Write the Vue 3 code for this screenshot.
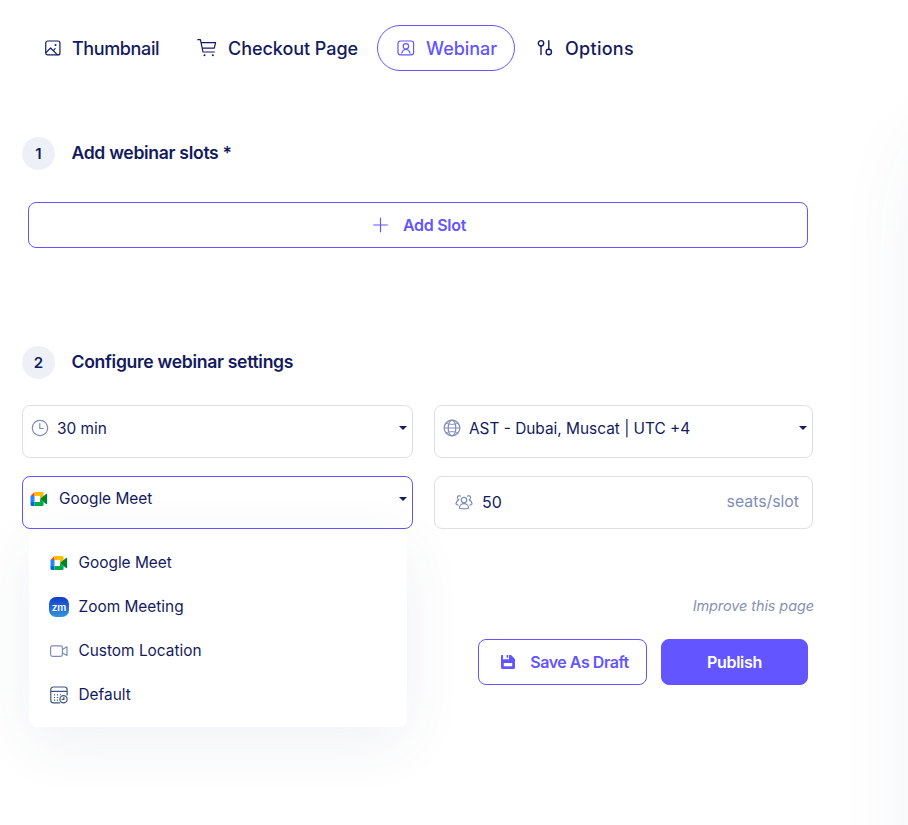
<script setup>
const tabs = [
  { id: 'thumbnail', label: 'Thumbnail' },
  { id: 'checkout', label: 'Checkout Page' },
  { id: 'webinar', label: 'Webinar', active: true },
  { id: 'options', label: 'Options' },
]
const locations = [
  { id: 'meet', label: 'Google Meet' },
  { id: 'zoom', label: 'Zoom Meeting' },
  { id: 'custom', label: 'Custom Location' },
  { id: 'default', label: 'Default' },
]
</script>

<template>
  <main class="page">
    <nav class="tabs">
      <a v-for="t in tabs" :key="t.id" class="tab" :class="['tab-' + t.id, { active: t.active }]">
        <svg v-if="t.id === 'thumbnail'" class="ic" width="16" height="16" viewBox="0 0 16 16">
          <rect x=".75" y="1" width="14.2" height="13.9" rx="2" />
          <path d="M1 12.6 5.6 8l6.6 6.7M9 9.8l1.1-1.1" />
          <circle cx="10.5" cy="5" r="1" class="dot" />
        </svg>
        <svg v-else-if="t.id === 'checkout'" class="ic" width="20" height="20" viewBox="0 0 20 20">
          <path d="M.8 1.7h2.6L6 14h11.3M4.2 4.6h14.4l-1.3 5.6H5.3" />
          <circle cx="7.5" cy="17.3" r="1" class="dot" />
          <circle cx="15.8" cy="17.3" r="1" class="dot" />
        </svg>
        <svg v-else-if="t.id === 'webinar'" class="ic" width="18" height="16" viewBox="0 0 18 16">
          <rect x="1" y="1" width="15.6" height="13.8" rx="2.4" />
          <circle cx="8.9" cy="6.3" r="2.7" />
          <path d="M4.8 13.1c.5-2.2 2-3.6 4.1-3.6s3.6 1.4 4.1 3.6" />
        </svg>
        <svg v-else class="ic bold" width="16" height="18" viewBox="0 0 16 18">
          <circle cx="4" cy="4.3" r="2.7" />
          <circle cx="11.8" cy="13" r="2.7" />
          <path d="M4 7v8.6M11.8 1.8v8.5" />
        </svg>
        <span>{{ t.label }}</span>
      </a>
    </nav>

    <section class="slots">
      <header class="step"><b>1</b><h2>Add webinar slots *</h2></header>
      <button class="btn outline add">
        <svg width="16" height="16" viewBox="0 0 16 16"><path d="M7.500 1.200v13.600M.7 8h13.600" /></svg>
        <span>Add Slot</span>
      </button>
    </section>

    <section class="settings">
      <header class="step"><b>2</b><h2 class="configure">Configure webinar settings</h2></header>
      <div class="fields">
        <div class="field">
          <svg class="muted" width="18" height="18" viewBox="0 0 18 18">
            <circle cx="9" cy="9" r="7.7" /><path d="M8.8 4.7v4.8h3.5" />
          </svg>
          <span>30 min</span><i class="caret"></i>
        </div>
        <div class="field">
          <svg class="muted" width="18" height="18" viewBox="0 0 18 18">
            <circle cx="9" cy="9" r="7.8" /><ellipse cx="9" cy="9" rx="3.8" ry="7.8" />
            <path d="M1.2 9h15.6" />
            <path d="M3 4.300c3.300 1.500 8.700 1.500 12 0M3 13.700c3.300-1.500 8.700-1.500 12 0" class="thin" />
          </svg>
          <span class="zone">AST - Dubai, Muscat | UTC +4</span><i class="caret"></i>
        </div>
        <div class="field open">
          <svg class="meet" width="18" height="16" viewBox="0 0 18 16">
            <path d="M.5 5 4.5 1v4z" fill="#ea4335" /><path d="M4.5 1H12c1 0 1.6.6 1.6 1.6V6L10 8V5H4.5z" fill="#fbbc04" />
            <path d="M.5 5h4v6h-4z" fill="#2684fc" /><path d="M.5 11h4v4H2C1 15 .5 14.4.5 13.5z" fill="#0066da" />
            <path d="M4.5 11H10V8l3.6 3v2.4c0 1-.6 1.6-1.6 1.6H4.5z" fill="#00ac47" /><path d="m10 8 6.1-5c.5-.4 1-.1 1 .5v9c0 .6-.5.9-1 .5z" fill="#00832d" />
          </svg>
          <span>Google Meet</span><i class="caret"></i>
          <ul class="menu">
            <li v-for="l in locations" :key="l.id">
              <svg v-if="l.id === 'meet'" width="20" height="16" viewBox="-1 0 20 16">
                <path d="M.5 5 4.5 1v4z" fill="#ea4335" /><path d="M4.5 1H12c1 0 1.6.6 1.6 1.6V6L10 8V5H4.5z" fill="#fbbc04" />
                <path d="M.5 5h4v6h-4z" fill="#2684fc" /><path d="M.5 11h4v4H2C1 15 .5 14.4.5 13.5z" fill="#0066da" />
                <path d="M4.5 11H10V8l3.6 3v2.4c0 1-.6 1.6-1.6 1.6H4.5z" fill="#00ac47" /><path d="m10 8 6.1-5c.5-.4 1-.1 1 .5v9c0 .6-.5.9-1 .5z" fill="#00832d" />
              </svg>
              <em v-else-if="l.id === 'zoom'" class="zm">zm</em>
              <svg v-else-if="l.id === 'custom'" class="muted" width="20" height="16" viewBox="0 0 20 16">
                <rect x="1.6" y="2.8" width="11.8" height="10.6" rx="1.8" />
                <path d="m13.8 6.2 4.2-2.4v8.6l-4.2-2.4" />
              </svg>
              <svg v-else class="cal" width="20" height="20" viewBox="0 0 20 20">
                <path d="M10.7 17.8H4.3a2.5 2.5 0 0 1-2.5-2.5V4.5A2.500 2.500 0 0 1 4.300 2h11.300a2.500 2.500 0 0 1 2.500 2.500v5.500M1.800 6.300h16.300" />
                <circle cx="14.5" cy="14.2" r="3.6" /><path d="M14.900 12.300v2.100h-1.800" />
                <path class="dots" d="M5.500 9.200v7M8.500 9.200v7M11.500 9.200v1" />
              </svg>
              <span>{{ l.label }}</span>
            </li>
          </ul>
        </div>
        <div class="field seats">
          <svg class="muted" width="18" height="16" viewBox="0 0 18 16">
            <circle cx="9" cy="6.1" r="2.7" />
            <path d="M4.4 14.2c0-2.500 2-4.500 4.600-4.500s4.600 2 4.600 4.500c-2.900.9-6.300.9-9.200 0z" />
            <path d="M5.500 2.200C3.500.8 1.600 2.900 2.800 4.900c.2.4.6.8 1 1-1.600.6-2.700 2.100-2.900 4l2.200 1.300M12.500 2.200c2-1.400 3.900.7 2.700 2.700-.2.4-.6.8-1 1 1.600.6 2.700 2.100 2.900 4l-2.200 1.300" />
          </svg>
          <span>50</span><small>seats/slot</small>
        </div>
      </div>
    </section>

    <footer>
      <a class="improve">Improve this page</a>
      <div class="actions">
        <button class="btn outline draft">
          <svg width="16" height="16" viewBox="0 0 16 16">
            <path class="disk" fill-rule="evenodd" d="M1.800 1H3v4.200h6V1h2l4 4v8.500c0 .9-.6 1.500-1.500 1.500h-11C1.600 15 1 14.400 1 13.500V1.800C1 1.300 1.300 1 1.800 1zM3.800 9v3.200h8.400V9zM6.600 1h1.600v2.700H6.600z" />
          </svg>
          <span>Save As Draft</span>
        </button>
        <button class="btn solid"><span>Publish</span></button>
      </div>
    </footer>
    <aside class="preview"></aside>
  </main>
</template>

<style>
body { background: #fff; }
</style>

<style scoped>
* { box-sizing: border-box; }
.page {
  position: relative; overflow: hidden; width: 908px; height: 825px; padding: 25px 94px 0 22px;
  font-family: Inter, "Liberation Sans", sans-serif; color: #131b5e; background: #fff;
}
svg { display: block; flex: none; fill: none; stroke: currentColor; stroke-width: 1.2; stroke-linecap: round; stroke-linejoin: round; }
.dot { fill: currentColor; stroke: none; }
.bold { stroke-width: 1.4; }
.tabs { display: grid; grid-template-columns: 154px 198px 138px 140px; height: 46px; margin-left: 3px; }
.tab { display: flex; align-items: center; gap: 11px; padding-left: 19px; border: 1px solid transparent; border-radius: 23px; font-size: 18px; font-weight: 550; letter-spacing: -.38px; white-space: nowrap; }
.tab-checkout { gap: 11px; padding-left: 17px; letter-spacing: -.05px; }
.tab-webinar { letter-spacing: -.02px; }
.tab-options { gap: 12px; padding-left: 21px; letter-spacing: .28px; }
.tab.active { color: #6355ff; border-color: #6355ff; }
.step { display: flex; align-items: center; height: 33px; gap: 16.5px; }
.step b { display: grid; place-items: center; width: 33px; height: 33px; border-radius: 50%; background: #edf1f7; font-size: 15px; font-weight: 600; }
.step h2 { margin: 0; padding-bottom: 2px; font-size: 17.6px; line-height: 22px; font-weight: 600; letter-spacing: -.32px; }
.slots { margin-top: 66px; }
.btn { display: flex; align-items: center; justify-content: center; height: 46px; padding: 0; border: 1px solid #6355ff; border-radius: 8px; background: #fff; color: #6355ff; font: 600 16px Inter, sans-serif; letter-spacing: -.3px; }
.add { width: 780px; margin: 32px 0 0 6px; gap: 14px; padding-left: 3px; }
.settings { margin-top: 98px; }
.fields { display: grid; grid-template-columns: 391px 379px; gap: 18px 21px; margin-top: 26px; }
.field { position: relative; display: flex; height: 53px; padding: 0 5px 7px 8px; align-items: center; gap: 8px; border: 1px solid #dcdfe8; border-radius: 8px; font-size: 15.4px; line-height: 20px; }
.field > span { padding-top: 2px; }
.muted { color: #7e8cb8; }
.thin { stroke-width: .9; }
.caret { margin-left: auto; border: 4px solid transparent; border-top-color: #131b5e; border-bottom: 0; }
.open { border-color: #6355ff; padding-left: 7px; padding-bottom: 8px; gap: 11px; }
.open > span { padding-top: 1px; }
.meet, .menu path[fill] { stroke: none; }
.seats { padding: 0 13px 1px 20px; gap: 9px; }
.seats > span { padding-top: 0; font-size: 16px; }
.seats small { margin-left: auto; font-size: 15.8px; color: #7e8cb8; }
.menu { position: absolute; z-index: 2; left: 6px; top: 52px; width: 378px; height: 198px; margin: 0; padding: 12px 20px 10px; list-style: none; border-radius: 8px; background: #fff; box-shadow: 0 16px 60px rgba(55, 70, 125, .075); }
.menu li { display: flex; height: 44px; align-items: center; gap: 8.5px; }
.menu li > :first-child { margin-right: 1px; }
.zm { display: grid; place-items: center; width: 20px; height: 20px; border-radius: 7px; background: linear-gradient(#123cc9, #3493df); color: #fff; font: 600 10px/16px Inter, sans-serif; letter-spacing: -.2px; padding-bottom: 1px; }
.cal { color: #3f5582; }
.dots { stroke-linecap: butt; stroke-dasharray: 1.2 1.5; }
footer { display: flex; flex-direction: column; align-items: flex-end; margin-top: 67px; }
.improve { font-size: 14.5px; line-height: 20px; font-style: italic; color: #8791b3; letter-spacing: -.1px; }
.actions { display: flex; gap: 14px; margin: 23px 6px 0 0; }
.draft { width: 169px; gap: 14px; padding-left: 4px; letter-spacing: -.46px; }
.disk { fill: currentColor; stroke: none; }
.solid { width: 147px; background: #6355ff; color: #fff; }
.preview { position: absolute; left: 924px; top: 140px; width: 380px; height: 800px; border-radius: 40px; box-shadow: 0 0 90px rgba(55, 70, 125, .085); }
</style>
